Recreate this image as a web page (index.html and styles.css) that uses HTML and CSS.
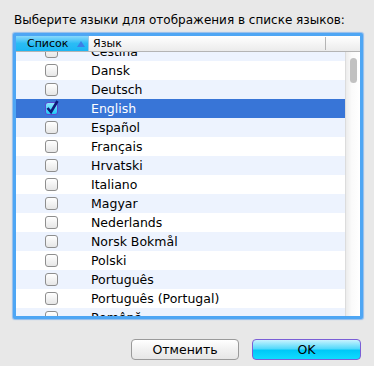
FILE: index.html
```html
<!DOCTYPE html>
<html lang="ru">
<head>
  <meta charset="UTF-8" />
  <title>Языки</title>
  <link rel="stylesheet" href="styles.css">
</head>
<body>

  <div class="dialog">
    <p class="prompt">Выберите языки для отображения в списке языков:</p>

    <!-- Language table -->
    <div class="table">
      <div class="head">
        <div class="col-list">Список <span class="sort"></span></div>
        <div class="col-lang">Язык</div>
      </div>
      <div class="body">
        <div class="rows">
          <div class="row"><span class="check"></span><span>Čeština</span></div>
          <div class="row"><span class="check"></span><span>Dansk</span></div>
          <div class="row"><span class="check"></span><span>Deutsch</span></div>
          <div class="row selected"><span class="check on"><svg width="14" height="15" viewBox="0 0 14 15"><path d="M2.5 8 L6 12 L12.5 1" fill="none" stroke="#101a7a" stroke-width="2.6"/></svg></span><span>English</span></div>
          <div class="row"><span class="check"></span><span>Español</span></div>
          <div class="row"><span class="check"></span><span>Français</span></div>
          <div class="row"><span class="check"></span><span>Hrvatski</span></div>
          <div class="row"><span class="check"></span><span>Italiano</span></div>
          <div class="row"><span class="check"></span><span>Magyar</span></div>
          <div class="row"><span class="check"></span><span>Nederlands</span></div>
          <div class="row"><span class="check"></span><span>Norsk Bokmål</span></div>
          <div class="row"><span class="check"></span><span>Polski</span></div>
          <div class="row"><span class="check"></span><span>Português</span></div>
          <div class="row"><span class="check"></span><span>Português (Portugal)</span></div>
          <div class="row"><span class="check"></span><span>Română</span></div>
        </div>
        <div class="scrollbar"><div class="thumb"></div></div>
      </div>
    </div>

    <div class="buttons">
      <button class="btn">Отменить</button>
      <button class="btn ok">OK</button>
    </div>
  </div>

</body>
</html>
```

FILE: styles.css
```css
body {
  margin: 0;
  background-color: #e8e8e8;
  font-family: 'DejaVu Sans', sans-serif;
  color: #000;
}

.dialog {
  padding: 12px 11px 0 13px;
}

.prompt {
  margin: 0 0 5px 1px;
  font-size: 12px;
  line-height: 16px;
  height: 16px;
}

.table {
  width: 344px;
  height: 280px;
  border: 3px solid #4ea6f4;
  border-radius: 2px;
  box-shadow: 0 0 1px 1px rgba(90, 160, 240, 0.6);
  background-color: #fff;
  display: flex;
  flex-direction: column;
}

.head {
  display: flex;
  height: 15px;
  border-bottom: 1px solid #b4b4b4;
  background: linear-gradient(#ffffff, #ebebeb);
  font-size: 11px;
  line-height: 15px;
}

.col-list {
  width: 61px;
  padding-left: 11px;
  background: linear-gradient(#8ad8fb, #2bbcf5 50%, #1bb6f4);
  border-right: 1px solid #9cc9e6;
  position: relative;
}

.sort {
  position: absolute;
  left: 61px;
  top: 5px;
  border-left: 4px solid transparent;
  border-right: 4px solid transparent;
  border-bottom: 6px solid #3d7fe6;
}

.col-lang {
  flex: 1;
  padding-left: 4px;
  margin-right: 34px;
  border-right: 1px solid #b4b4b4;
  margin-top: 1px;
  margin-bottom: 1px;
  line-height: 13px;
}

.body {
  flex: 1;
  display: flex;
  overflow: hidden;
}

.rows {
  flex: 1;
  margin-top: -10px;
  font-size: 12.5px;
}

.row {
  display: flex;
  align-items: center;
  height: 19px;
}

.row:nth-child(odd) {
  background-color: #edf3fe;
}

.row.selected {
  background-color: #3875d7;
  color: #fff;
}

.check {
  width: 11px;
  height: 11px;
  margin: 0 33px 0 29px;
  border: 1px solid #8e8e8e;
  border-radius: 3px;
  background: linear-gradient(#ffffff, #e6e6e6);
  position: relative;
}

.check.on {
  border-color: #5a4ad0;
  background: linear-gradient(#8ee6ff, #1ec8f8);
}

.check svg {
  position: absolute;
  left: -1px;
  top: -3px;
}

.scrollbar {
  width: 14px;
  border-left: 1px solid #dcdcdc;
  background: linear-gradient(to right, #ececec, #fafafa 40%, #ffffff);
}

.thumb {
  width: 7px;
  height: 25px;
  margin: 6px 0 0 4px;
  border-radius: 4px;
  background-color: #c1c1c1;
}

.buttons {
  display: flex;
  justify-content: flex-end;
  gap: 13px;
  margin-top: 20px;
  margin-right: 2px;
}

.btn {
  width: 108px;
  height: 21px;
  border: 1px solid #9a9a9a;
  border-radius: 4px;
  background: linear-gradient(#ffffff, #f1f1f1 50%, #e6e6e6);
  font-family: 'DejaVu Sans', sans-serif;
  font-size: 12.5px;
  padding: 0;
  color: #000;
}

.btn.ok {
  width: 109px;
  border-color: #7b5fd6;
  background: linear-gradient(#c8f3ff, #55d9fb 45%, #00c8f8 55%, #10dcff);
}
```
